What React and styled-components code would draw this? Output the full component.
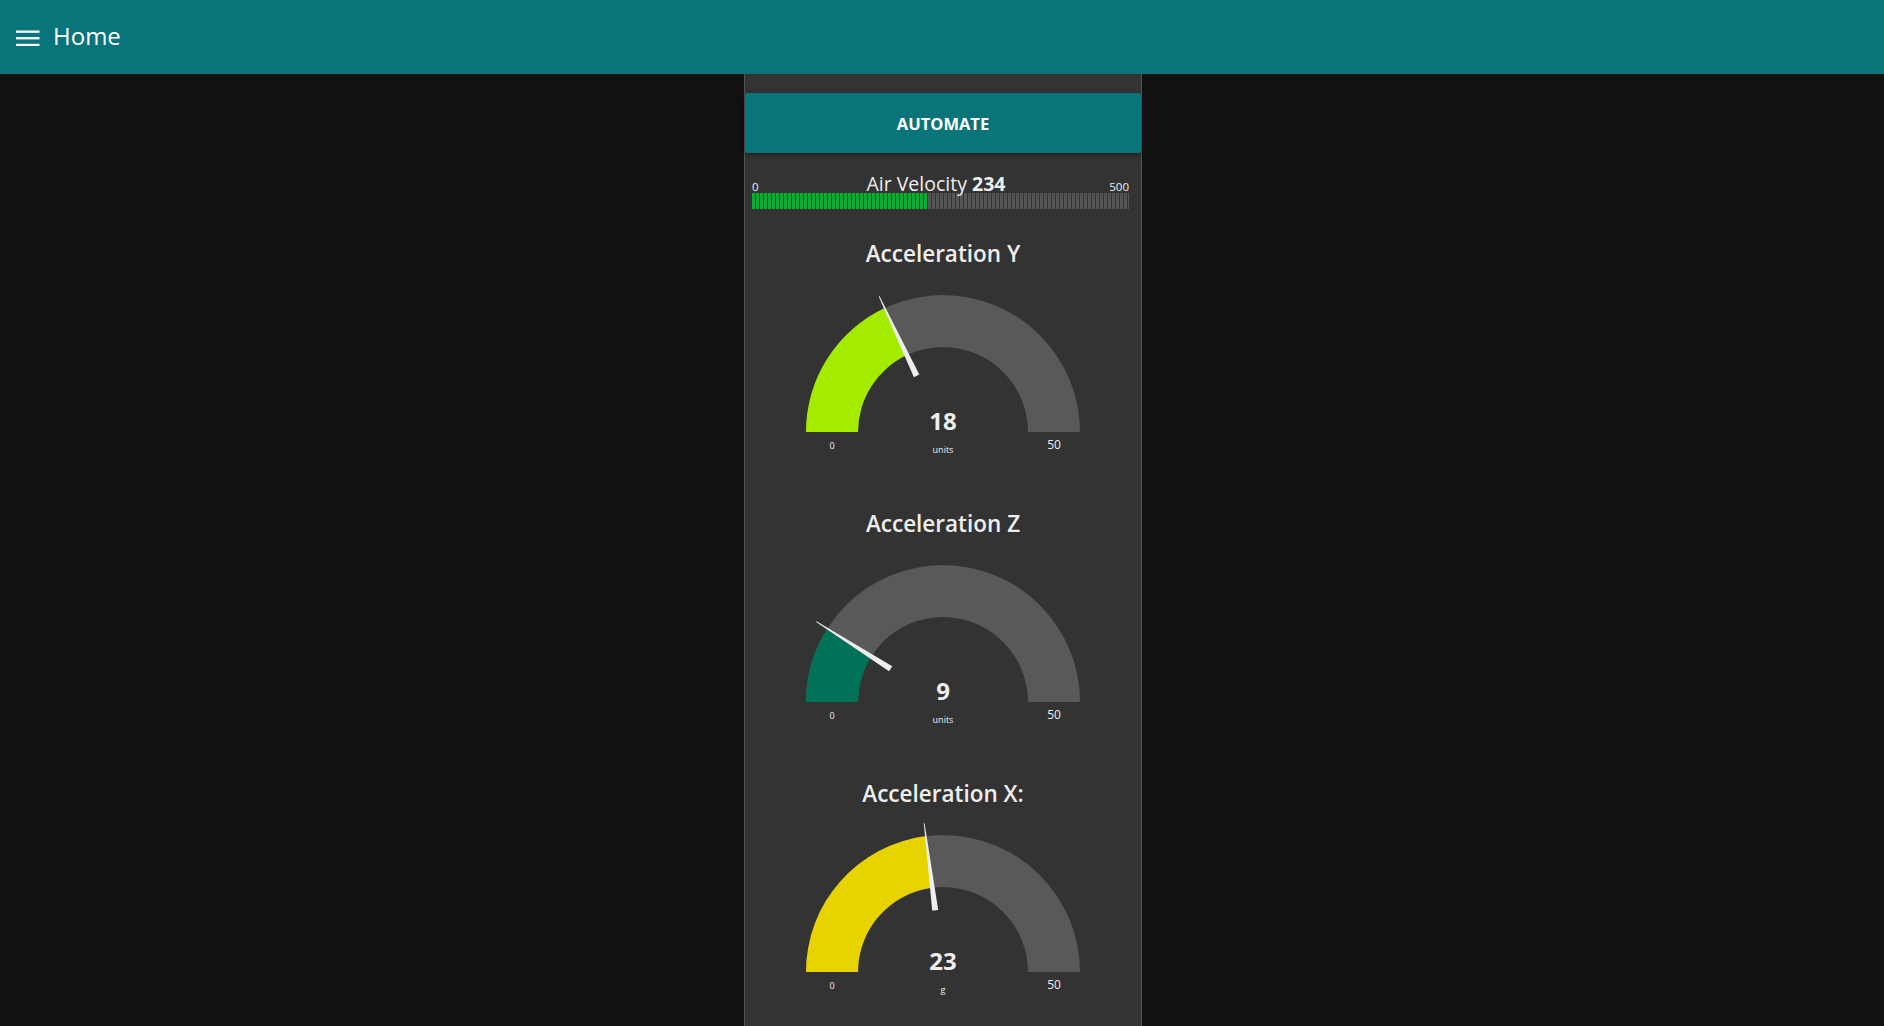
import React from 'react'
import styled, { createGlobalStyle } from 'styled-components'

const GlobalStyle = createGlobalStyle`
  html, body {
    margin: 0;
    padding: 0;
    height: 100%;
    overflow: hidden;
    background: #111111;
    font-family: "Open Sans", "Noto Sans", sans-serif;
    color: #eeeeee;
  }
`

const gauges = [
  { title: 'Acceleration Y', value: 18, min: 0, max: 50, units: 'units', color: '#a4eb00' },
  { title: 'Acceleration Z', value: 9, min: 0, max: 50, units: 'units', color: '#007258' },
  { title: 'Acceleration X:', value: 23, min: 0, max: 50, units: 'g', color: '#e6d300' },
]

const CX = 198
const CY = 158
const R_OUT = 137
const R_IN = 85

const pt = (r, a) => [CX - r * Math.cos(a), CY - r * Math.sin(a)]

const arcPath = (from, to) => {
  const [x1, y1] = pt(R_OUT, from)
  const [x2, y2] = pt(R_OUT, to)
  const [x3, y3] = pt(R_IN, to)
  const [x4, y4] = pt(R_IN, from)
  return `M${x1},${y1} A${R_OUT},${R_OUT} 0 0 1 ${x2},${y2} L${x3},${y3} A${R_IN},${R_IN} 0 0 0 ${x4},${y4} Z`
}

const needlePath = (a) => {
  const perp = a + Math.PI / 2
  const [bx, by] = pt(62, a)
  const [tx, ty] = pt(150, a)
  const w = 3
  const t = 0.4
  const ox = Math.cos(perp)
  const oy = Math.sin(perp)
  return `M${bx - w * ox},${by - w * oy} L${tx - t * ox},${ty - t * oy} L${tx + t * ox},${ty + t * oy} L${bx + w * ox},${by + w * oy} Z`
}

const Gauge = ({ title, value, min, max, units, color }) => {
  const a = ((value - min) / (max - min)) * Math.PI
  return (
    <GaugeCard>
      <GaugeTitle>{title}</GaugeTitle>
      <svg width="396" height="229" viewBox="0 0 396 229">
        <path d={arcPath(0, Math.PI)} fill="#595959" />
        <path d={arcPath(0, a)} fill={color} />
        <path d={needlePath(a)} fill="#eeeeee" />
        <GaugeValue x={CX} y={CY - 2}>{value}</GaugeValue>
        <GaugeUnits x={CX} y={CY + 21}>{units}</GaugeUnits>
        <MinLabel x={CX - (R_OUT + R_IN) / 2} y={CY + 17}>{min}</MinLabel>
        <MaxLabel x={CX + (R_OUT + R_IN) / 2} y={CY + 17}>{max}</MaxLabel>
      </svg>
    </GaugeCard>
  )
}

const LevelBar = ({ label, value, min, max }) => (
  <LevelCard>
    <LevelLabels>
      <LevelEnd>{min}</LevelEnd>
      <LevelTitle>
        {label} <b>{value}</b>
      </LevelTitle>
      <LevelEnd>{max}</LevelEnd>
    </LevelLabels>
    <Stripes>
      <StripeFill style={{ width: `${((value - min) / (max - min)) * 100}%` }} />
    </Stripes>
  </LevelCard>
)

const App = () => {
  return (
    <>
      <GlobalStyle />
      <Toolbar>
        <MenuIcon width="24" height="16" viewBox="0 0 24 16">
          <rect x="0" y="0.5" width="23.5" height="2.3" fill="#fff" />
          <rect x="0" y="7.1" width="23.5" height="2.3" fill="#fff" />
          <rect x="0" y="13.8" width="23.5" height="2.3" fill="#fff" />
        </MenuIcon>
        <PageTitle>Home</PageTitle>
      </Toolbar>
      <Content>
        <Group>
          <AutoButton>Automate</AutoButton>
          <LevelBar label="Air Velocity" value={234} min={0} max={500} />
          {gauges.map((g) => (
            <Gauge key={g.title} {...g} />
          ))}
        </Group>
      </Content>
    </>
  )
}

export default App

const Toolbar = styled.header`
  height: 74px;
  background: #097479;
  display: flex;
  align-items: center;
  padding-left: 16px;
  gap: 13px;
  color: #ffffff;
`
const MenuIcon = styled.svg`
  display: block;
  margin-top: 1px;
`
const PageTitle = styled.span`
  font-size: 24px;
  line-height: 1;
  margin-top: -2px;
`
const Content = styled.main`
  display: flex;
  justify-content: center;
  padding-left: 2px;
`
const Group = styled.section`
  width: 396px;
  min-height: calc(100vh - 74px);
  background: #333333;
  border-left: 1px solid #555555;
  border-right: 1px solid #555555;
  padding-top: 19px;
  display: flex;
  flex-direction: column;
`
const AutoButton = styled.button`
  height: 60px;
  width: 100%;
  border: none;
  border-radius: 2px;
  background: #097479;
  color: #ffffff;
  font-family: "Open Sans", "Noto Sans", sans-serif;
  font-weight: 700;
  font-size: 16.5px;
  padding-top: 2px;
  text-transform: uppercase;
  box-shadow: 0 2px 5px rgba(0, 0, 0, 0.4);
  cursor: pointer;
`
const LevelCard = styled.div`
  height: 80px;
  box-sizing: border-box;
  padding: 18px 12px 0 7px;
`
const LevelLabels = styled.div`
  height: 22px;
  display: flex;
  align-items: flex-end;
  justify-content: space-between;
  padding-bottom: 0;
  box-sizing: border-box;
`
const LevelEnd = styled.span`
  font-size: 11.5px;
  line-height: 1;
  color: #eeeeee;
  margin-bottom: 1px;
`
const LevelTitle = styled.span`
  font-size: 19.5px;
  line-height: 1;
  color: #eeeeee;
  margin-left: 4px;
  b {
    font-weight: 700;
  }
`
const stripes = (c) =>
  `repeating-linear-gradient(90deg, ${c} 0 2.7px, transparent 2.7px 4px)`

const Stripes = styled.div`
  height: 16px;
  background: ${stripes('#555555')};
`
const StripeFill = styled.div`
  height: 100%;
  background: ${stripes('#0aab38')};
  background-color: #333333;
`
const GaugeCard = styled.div`
  height: 270px;
  display: flex;
  flex-direction: column;
  align-items: center;
  svg {
    display: block;
  }
`
const GaugeTitle = styled.div`
  height: 41px;
  line-height: 42px;
  font-size: 22.5px;
  font-weight: 600;
  color: #eeeeee;
`
const GaugeValue = styled.text`
  font-family: "Open Sans", "Noto Sans", sans-serif;
  font-size: 24px;
  font-weight: 700;
  fill: #eeeeee;
  text-anchor: middle;
`
const GaugeUnits = styled.text`
  font-family: "Open Sans", "Noto Sans", sans-serif;
  font-size: 9px;
  fill: #eeeeee;
  text-anchor: middle;
`
const MinLabel = styled.text`
  font-family: "Open Sans", "Noto Sans", sans-serif;
  font-size: 9px;
  fill: #eeeeee;
  text-anchor: middle;
`
const MaxLabel = styled(MinLabel)`
  font-size: 12px;
`
